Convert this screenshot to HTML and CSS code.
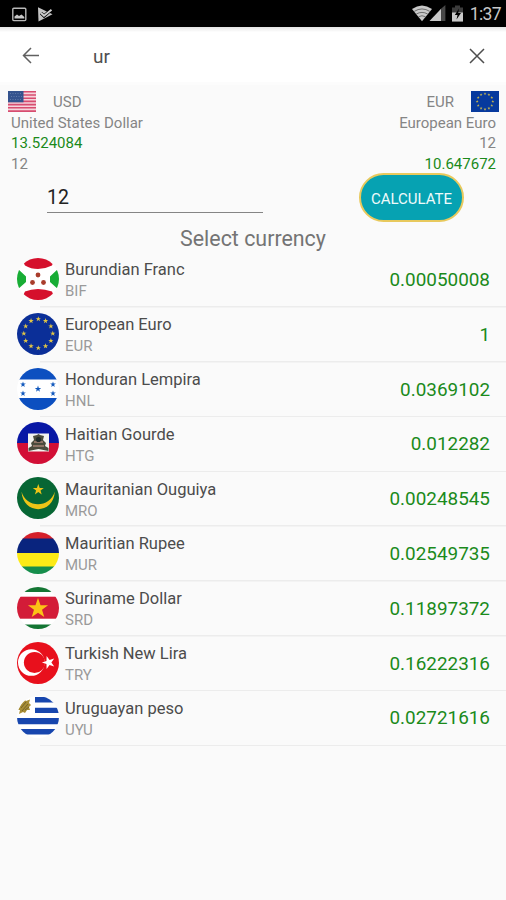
FILE: index.html
```html
<!DOCTYPE html>
<html lang="en">
<head>
<meta charset="utf-8">
<title>Currency converter</title>
<link rel="stylesheet" href="styles.css">
</head>
<body>
<svg width="0" height="0" class="defs" aria-hidden="true">
  <defs>
    <clipPath id="round"><circle cx="21" cy="21" r="21"/></clipPath>
    <path id="star" d="M0-10 2.4-3.1 9.5-3.1 3.8 1.2 5.9 8.1 0 4-5.9 8.1-3.8 1.2-9.5-3.1-2.4-3.1Z"/>
    <g id="ring">
      <use href="#star" transform="translate(0 -14.5) scale(.28)"/>
      <use href="#star" transform="translate(7.25 -12.6) scale(.28)"/>
      <use href="#star" transform="translate(12.6 -7.25) scale(.28)"/>
      <use href="#star" transform="translate(14.5 0) scale(.28)"/>
      <use href="#star" transform="translate(12.6 7.25) scale(.28)"/>
      <use href="#star" transform="translate(7.25 12.6) scale(.28)"/>
      <use href="#star" transform="translate(0 14.5) scale(.28)"/>
      <use href="#star" transform="translate(-7.25 12.6) scale(.28)"/>
      <use href="#star" transform="translate(-12.6 7.25) scale(.28)"/>
      <use href="#star" transform="translate(-14.5 0) scale(.28)"/>
      <use href="#star" transform="translate(-12.6 -7.25) scale(.28)"/>
      <use href="#star" transform="translate(-7.25 -12.6) scale(.28)"/>
    </g>
  </defs>
</svg>

<header class="status">
  <svg class="status-left" width="42" height="16" viewBox="0 0 42 16">
    <rect x=".8" y="1.2" width="13" height="12.4" rx="1" fill="none" stroke="#b8b8b8" stroke-width="1.4"/>
    <path d="M2.5 11.5V9.5L5 7.5 7 9 9.5 7.5 12.3 10V11.5Z" fill="#c8c8c8"/>
    <path d="M26 .3 40.5 7.2 26.5 14.6Z" fill="#c4c4c4"/>
    <path d="M29 6.2 32 9 39.5 2.5" fill="none" stroke="#000" stroke-width="3.2"/>
    <path d="M29 6 32 8.8 39.5 2.8" fill="none" stroke="#d0d0d0" stroke-width="1.9"/>
  </svg>
  <div class="status-right">
    <svg width="52" height="17" viewBox="0 0 52 17">
      <path d="M0 4Q10 -3 20 4L10 16.2Z" fill="#c9c9c9"/>
      <path d="M2.2 6.4Q10 1.5 17.8 6.4M4.3 9Q10 5.8 15.7 9M6.5 11.7Q10 9.8 13.5 11.7" fill="none" stroke="#555" stroke-width=".8"/>
      <path d="M17.5 16 29.3 3.5V16Z" fill="#c9c9c9"/>
      <path d="M29.3 3.5 33.4 0V16H29.3Z" fill="#484848"/>
      <path d="M40 2.500H43V.5H48V2.500H51V16.500H40Z" fill="#3c3c3c"/>
      <path d="M40 7.500H51V16.500H40Z" fill="#c9c9c9"/>
      <path d="M47 3.500 42.800 10H45.500L44.500 14.500 49 8H46.200Z" fill="#000"/>
    </svg>
    <span class="clock">1:37</span>
  </div>
</header>

<div class="search">
  <svg width="18" height="17" viewBox="0 0 18 17"><path d="M17 8.5H1.5M9 1 1.5 8.5 9 16" fill="none" stroke="#606060" stroke-width="1.5"/></svg>
  <span class="query">ur</span>
  <svg class="close" width="16" height="16" viewBox="0 0 16 16"><path d="M1 1 15 15M15 1 1 15" fill="none" stroke="#4e4e4e" stroke-width="1.5"/></svg>
</div>

<section class="pair">
  <div class="side">
    <div class="head">
      <svg width="28" height="21" viewBox="0 0 28 21">
        <rect width="28" height="21" fill="#f6d5dc"/>
        <path d="M0 .8H28M0 4H28M0 7.2H28M0 10.4H28M0 13.6H28M0 16.8H28M0 20.1H28" stroke="#d74d70" stroke-width="1.6"/>
        <rect width="15.5" height="11.3" fill="#34538e"/>
        <path d="M2 2.5H14M3 5.5H14M2 8.5H14" stroke="#7289b4" stroke-width=".7" stroke-dasharray="1 1.5"/>
      </svg>
      <span class="symbol">USD</span>
    </div>
    <div class="line">United States Dollar</div>
    <div class="line green">13.524084</div>
    <div class="line">12</div>
  </div>
  <div class="side right">
    <div class="head">
      <span class="symbol">EUR</span>
      <svg width="28" height="21" viewBox="0 0 28 21">
        <rect width="28" height="21" fill="#073a9e"/>
        <g transform="translate(14 10.5) scale(.54)" fill="#c9b84e"><use href="#ring"/></g>
      </svg>
    </div>
    <div class="line">European Euro</div>
    <div class="line">12</div>
    <div class="line green">10.647672</div>
  </div>
</section>

<div class="entry">
  <div class="amount">12</div>
  <div class="button">CALCULATE</div>
</div>

<h1 class="title">Select currency</h1>

<ul class="list">
  <li class="row">
    <svg class="flag" viewBox="0 0 42 42"><g clip-path="url(#round)">
      <rect width="42" height="42" fill="#fff"/>
      <path d="M3-2H39L35 7.5Q28 11 21 11Q14 11 8 7.5ZM3 44H39L35 33.5Q28 31 21 31Q14 31 8 33.5Z" fill="#d5102c"/>
      <path d="M0 10 9 18.5V24L0 32ZM42 10 33 18.5V24L42 32Z" fill="#18ad35"/>
      <g fill="#a93d2c"><circle cx="21" cy="17" r="2.4"/><circle cx="15.5" cy="24.5" r="2.4"/><circle cx="26.500" cy="24.500" r="2.4"/></g>
    </g></svg>
    <div class="info"><span class="name">Burundian Franc</span><span class="code">BIF</span></div>
    <span class="rate">0.00050008</span>
  </li>
  <li class="row">
    <svg class="flag" viewBox="0 0 42 42"><circle cx="21" cy="21" r="21" fill="#0b2f98"/><g transform="translate(21.3 20.5)" fill="#e2c644"><use href="#ring"/></g></svg>
    <div class="info"><span class="name">European Euro</span><span class="code">EUR</span></div>
    <span class="rate">1</span>
  </li>
  <li class="row">
    <svg class="flag" viewBox="0 0 42 42"><g clip-path="url(#round)">
      <rect width="42" height="42" fill="#fff"/><path d="M0 0H42V11.5H0ZM0 30H42V42H0Z" fill="#0c4fc0"/>
      <g fill="#1259bd"><use href="#star" transform="translate(21 21) scale(.34)"/><use href="#star" transform="translate(6 16.5) scale(.3)"/><use href="#star" transform="translate(6 25.5) scale(.3)"/><use href="#star" transform="translate(36 16.5) scale(.3)"/><use href="#star" transform="translate(36 25.5) scale(.3)"/></g>
    </g></svg>
    <div class="info"><span class="name">Honduran Lempira</span><span class="code">HNL</span></div>
    <span class="rate">0.0369102</span>
  </li>
  <li class="row">
    <svg class="flag" viewBox="0 0 42 42"><g clip-path="url(#round)">
      <rect width="42" height="21" fill="#0817a5"/><rect y="21" width="42" height="21" fill="#d20f36"/>
      <rect x="11" y="11.5" width="21" height="18" fill="#f3f3ef"/>
      <path d="M11.5 29V26L15 24 14 21 17 18 16 14 20 13 21.5 12 23 13 27 14 26 18 29 21 28 24 31.5 26V29L21.5 27Z" fill="#4a4b3c"/>
      <path d="M17 20H26M16 24H27" stroke="#a78474" stroke-width="1.3"/><circle cx="21.5" cy="17.5" r="2.6" fill="#202a29"/>
    </g></svg>
    <div class="info"><span class="name">Haitian Gourde</span><span class="code">HTG</span></div>
    <span class="rate">0.012282</span>
  </li>
  <li class="row">
    <svg class="flag" viewBox="0 0 42 42"><circle cx="21" cy="21" r="21" fill="#076634"/>
      <path d="M4.5 14.5C6 38 36.5 38 37.8 14.5C33 31.500 9 31.500 4.5 14.5Z" fill="#eec417"/>
      <use href="#star" transform="translate(21.3 12.7) scale(.58)" fill="#eec417"/></svg>
    <div class="info"><span class="name">Mauritanian Ouguiya</span><span class="code">MRO</span></div>
    <span class="rate">0.00248545</span>
  </li>
  <li class="row">
    <svg class="flag" viewBox="0 0 42 42"><g clip-path="url(#round)">
      <rect width="42" height="7" fill="#d5202a"/><rect y="6.5" width="42" height="14.5" fill="#09247e"/><rect y="21" width="42" height="14" fill="#fcea16"/><rect y="34.5" width="42" height="8" fill="#168e4c"/>
    </g></svg>
    <div class="info"><span class="name">Mauritian Rupee</span><span class="code">MUR</span></div>
    <span class="rate">0.02549735</span>
  </li>
  <li class="row">
    <svg class="flag" viewBox="0 0 42 42"><g clip-path="url(#round)">
      <rect width="42" height="42" fill="#fff"/><path d="M0 0H42V5H0ZM0 37.5H42V42H0Z" fill="#147634"/><rect y="9.7" width="42" height="22" fill="#d31c38"/>
      <use href="#star" transform="translate(21 21.5) scale(1.06)" fill="#fcc216"/>
    </g></svg>
    <div class="info"><span class="name">Suriname Dollar</span><span class="code">SRD</span></div>
    <span class="rate">0.11897372</span>
  </li>
  <li class="row">
    <svg class="flag" viewBox="0 0 42 42"><circle cx="21" cy="21" r="21" fill="#e8101c"/>
      <circle cx="14.3" cy="20.5" r="13.3" fill="#fff"/><circle cx="17.5" cy="20.5" r="10.6" fill="#e8101c"/>
      <use href="#star" transform="translate(31.7 20.5) rotate(-18) scale(.68)" fill="#fff"/></svg>
    <div class="info"><span class="name">Turkish New Lira</span><span class="code">TRY</span></div>
    <span class="rate">0.16222316</span>
  </li>
  <li class="row">
    <svg class="flag" viewBox="0 0 42 42"><g clip-path="url(#round)">
      <rect width="42" height="42" fill="#fff"/>
      <path d="M18 1H42V6.5H18ZM18 11.8H42V17H18ZM0 22H42V28.3H0ZM0 33H42V38.5H0Z" fill="#1746ae"/>
      <path d="M1 14 4 8 6 6 7 3 9 5 13 3.500 12 7 14 9 12 11 13 14 10 14 8 17 6 16 2 18 3 14Z" fill="#a78d35"/>
      <path d="M4 12 9 6M5 15 11 8M8 14 12 11" stroke="#746329" stroke-width="1"/>
    </g></svg>
    <div class="info"><span class="name">Uruguayan peso</span><span class="code">UYU</span></div>
    <span class="rate">0.02721616</span>
  </li>
</ul>
</body>
</html>
```
FILE: styles.css
```css
* { box-sizing: border-box; }
body {
  margin: 0;
  width: 506px;
  height: 900px;
  overflow: hidden;
  background: #fafafa;
  font-family: Roboto, "Liberation Sans", sans-serif;
  color: #858585;
}
svg { display: block; flex: none; }
.defs { position: absolute; }

.status {
  height: 27px;
  background: #000;
  display: flex;
  justify-content: space-between;
  align-items: flex-start;
  padding: 7px 5px 0 12px;
}
.status-right { display: flex; margin-top: -2px; gap: 6px; }
.clock { color: #c8c8c8; font-size: 17.5px; line-height: 19px; letter-spacing: -.6px; }

.search {
  height: 58px;
  background: linear-gradient(#e4e4e4, #fff 5px);
  display: flex;
  align-items: center;
  padding: 2px 21px 0 22px;
  border-bottom: 3px solid #fcfcfc;
}
.query { margin: 3px 0 0 53px; font-size: 19px; line-height: 22px; color: #505050; }
.close { margin-left: auto; }

.pair {
  height: 88px;
  display: flex;
  justify-content: space-between;
  padding: 5px 10px 0 11px;
  font-size: 15px;
}
.head { height: 22px; display: flex; align-items: center; gap: 17px; margin-left: -3px; }
.symbol { padding-top: 2px; }
.right { text-align: right; }
.right .head { justify-content: flex-end; margin: 0 -3px 0 0; }
.line { height: 20.3px; line-height: 22.6px; }
.green { color: #1b8a1b; }

.entry { height: 50px; display: flex; justify-content: space-between; padding: 0 42px 0 47px; }
.amount {
  width: 216px;
  height: 40px;
  border-bottom: 1px solid #858585;
  color: #222;
  font-size: 19.5px;
  line-height: 49px;
}
.button {
  width: 105px;
  height: 49px;
  border: 2px solid #e8c95d;
  border-radius: 25px;
  background: #06a2b2;
  color: #eefafb;
  font-size: 15px;
  line-height: 48px;
  text-align: center;
}
.title { margin: 0; height: 30px; font-size: 21.4px; line-height: 31px; font-weight: 400; text-align: center; color: #747474; }

.list { margin: 0; padding: 0; list-style: none; }
.row {
  height: 54.8px;
  display: flex;
  align-items: flex-start;
  padding: 5px 16px 0 17px;
  background: linear-gradient(#ececec, #ececec) 40px 100% / 466px 1.5px no-repeat;
}
.flag { width: 42px; height: 42px; }
.info { display: flex; flex-direction: column; margin: 1.4px 0 0 6px; }
.name { font-size: 16.5px; line-height: 22px; color: #4c4c4c; }
.code { font-size: 15px; line-height: 21px; color: #9a9a9a; }
.rate { margin-left: auto; font-size: 18.9px; line-height: 44.6px; color: #1b8a1b; }
```
